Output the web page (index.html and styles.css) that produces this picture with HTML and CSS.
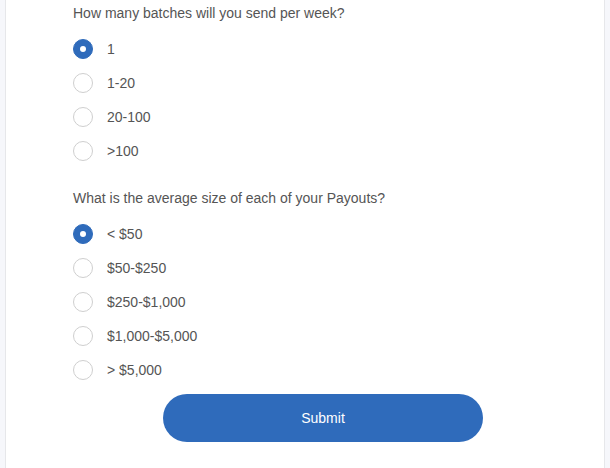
FILE: index.html
```html
<!DOCTYPE html>
<html>
<head>
<meta charset="utf-8">
<link rel="stylesheet" href="styles.css">
</head>
<body>
<div class="card">
  <form class="form">
    <div class="question">How many batches will you send per week?</div>
    <div class="options first">
      <label class="option"><span class="radio checked"></span><span class="label">1</span></label>
      <label class="option"><span class="radio"></span><span class="label">1-20</span></label>
      <label class="option"><span class="radio"></span><span class="label">20-100</span></label>
      <label class="option"><span class="radio"></span><span class="label">&gt;100</span></label>
    </div>
    <div class="question q2">What is the average size of each of your Payouts?</div>
    <div class="options">
      <label class="option"><span class="radio checked"></span><span class="label">&lt; $50</span></label>
      <label class="option"><span class="radio"></span><span class="label">$50-$250</span></label>
      <label class="option"><span class="radio"></span><span class="label">$250-$1,000</span></label>
      <label class="option"><span class="radio"></span><span class="label">$1,000-$5,000</span></label>
      <label class="option"><span class="radio"></span><span class="label">&gt; $5,000</span></label>
    </div>
    <button type="button" class="submit">Submit</button>
  </form>
</div>
</body>
</html>
```
FILE: styles.css
```css
html, body {
  margin: 0;
  padding: 0;
}
body {
  background: #f6f7fb;
  font-family: "Liberation Sans", Arial, sans-serif;
  color: #555;
  font-size: 14px;
}
.card {
  margin: 0 5px;
  height: 468px;
  box-sizing: border-box;
  background: #fff;
  border-left: 1px solid #e6e7ea;
  border-right: 1px solid #e6e7ea;
  padding: 3px 0 0 67px;
}
.form {
  display: flex;
  flex-direction: column;
  align-items: flex-start;
}
.question {
  line-height: 20px;
  height: 20px;
}
.q2 {
  margin-top: 20px;
}
.options {
  display: flex;
  flex-direction: column;
  margin-top: 9px;
}
.options.first {
  margin-top: 9px;
}
.option {
  display: flex;
  align-items: center;
  height: 34px;
  gap: 14px;
}
.radio {
  width: 20px;
  height: 20px;
  box-sizing: border-box;
  border-radius: 50%;
  border: 1px solid #cfcfcf;
  background: #fff;
  display: flex;
  align-items: center;
  justify-content: center;
}
.radio.checked {
  background: #2f6bbb;
  border-color: #2f6bbb;
}
.radio.checked::after {
  content: "";
  width: 6px;
  height: 6px;
  border-radius: 50%;
  background: #fff;
}
.label {
  line-height: 20px;
}
.submit {
  margin-top: 7px;
  margin-left: 90px;
  width: 320px;
  height: 48px;
  border: none;
  border-radius: 24px;
  background: #2f6bbb;
  color: #fff;
  font-family: "Liberation Sans", Arial, sans-serif;
  font-size: 14px;
  cursor: pointer;
}
```
